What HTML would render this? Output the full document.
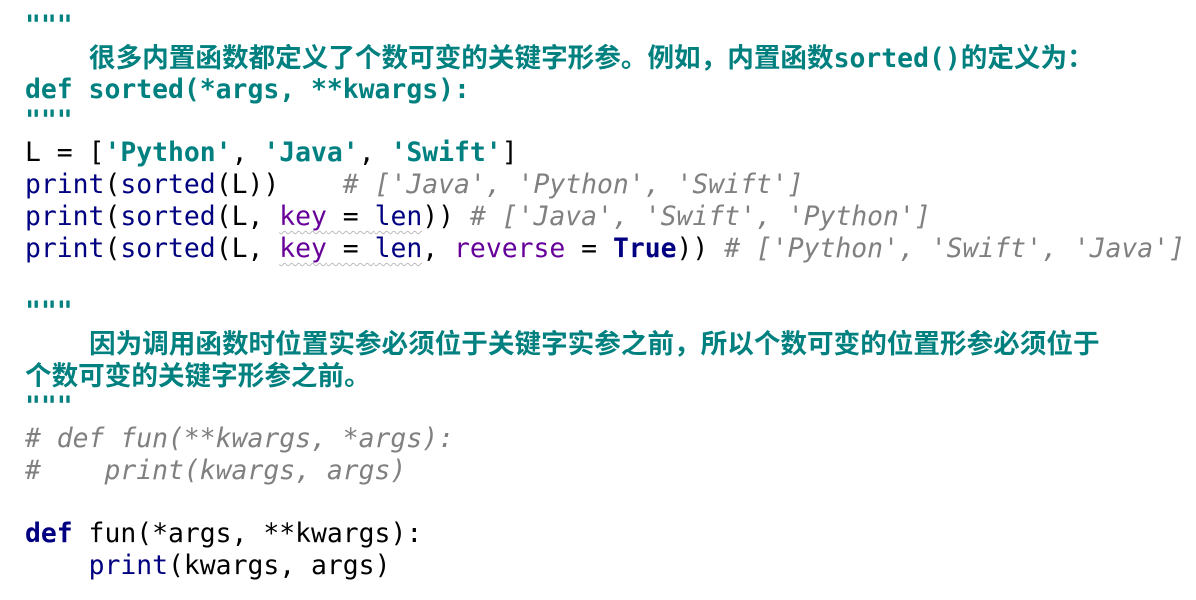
<!DOCTYPE html>
<html><head><meta charset="utf-8"><style>
html,body{margin:0;padding:0;background:#fff;width:1196px;height:600px;overflow:hidden}
.l{position:absolute;left:25px;height:32px;line-height:32px;white-space:pre;font-family:"DejaVu Sans Mono","Liberation Mono",monospace;font-size:26.4px;color:#000}
.d{color:#00807f;font-weight:bold}
.cn{font-family:"Liberation Sans","Noto Sans CJK SC",sans-serif;font-size:26.6px;font-weight:bold;color:#00807f}
.kw{color:#000080;font-weight:bold}
.bi{color:#000080}
.pa{color:#660099}
.s{color:#008080;font-weight:bold}
.c{color:#808080;font-style:italic}
.w{text-decoration:underline wavy #bbb;text-decoration-thickness:1px;text-underline-offset:5px}
</style></head><body>
<div class="l d" style="top:10px">"""</div>
<div class="l" style="top:42px"><span class="cn" style="margin-left:64px">很多内置函数都定义了个数可变的关键字形参。例如，内置函数</span><span class="d">sorted()</span><span class="cn">的定义为：</span></div>
<div class="l d" style="top:74px">def sorted(*args, **kwargs):</div>
<div class="l d" style="top:105px">"""</div>
<div class="l" style="top:137px">L = [<span class="s">'Python'</span>, <span class="s">'Java'</span>, <span class="s">'Swift'</span>]</div>
<div class="l" style="top:169px"><span class="bi">print</span>(<span class="bi">sorted</span>(L))    <span class="c"># ['Java', 'Python', 'Swift']</span></div>
<div class="l" style="top:201px"><span class="bi">print</span>(<span class="bi">sorted</span>(L, <span class="w"><span class="pa">key</span> = <span class="bi">len</span></span>)) <span class="c"># ['Java', 'Swift', 'Python']</span></div>
<div class="l" style="top:233px"><span class="bi">print</span>(<span class="bi">sorted</span>(L, <span class="w"><span class="pa">key</span> = <span class="bi">len</span></span>, <span class="pa">reverse</span> = <span class="kw">True</span>)) <span class="c"># ['Python', 'Swift', 'Java']</span></div>
<div class="l d" style="top:296px">"""</div>
<div class="l" style="top:328px"><span class="cn" style="margin-left:64px">因为调用函数时位置实参必须位于关键字实参之前，所以个数可变的位置形参必须位于</span></div>
<div class="l" style="top:360px"><span class="cn">个数可变的关键字形参之前。</span></div>
<div class="l d" style="top:391px">"""</div>
<div class="l c" style="top:423px"># def fun(**kwargs, *args):</div>
<div class="l c" style="top:455px">#    print(kwargs, args)</div>
<div class="l" style="top:518px"><span class="kw">def</span> fun(*args, **kwargs):</div>
<div class="l" style="top:550px">    <span class="bi">print</span>(kwargs, args)</div>
</body></html>
